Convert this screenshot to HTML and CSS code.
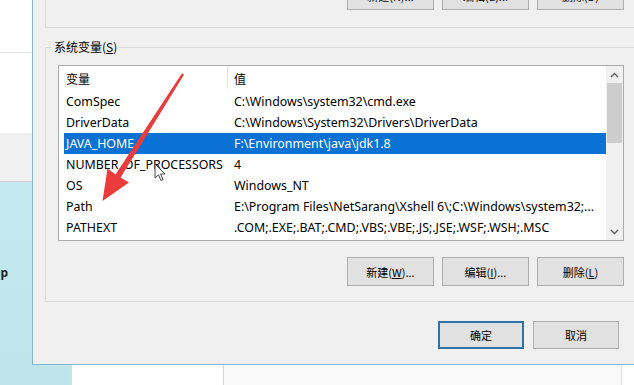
FILE: index.html
```html
<!DOCTYPE html>
<html lang="zh-CN">
<head>
<meta charset="utf-8">
<title>环境变量</title>
<link rel="stylesheet" href="styles.css">
</head>
<body>
<div class="screen">
  <div class="main">
    <div class="side">
      <div class="side-top"></div>
      <div class="side-mid"></div>
      <div class="side-gray"></div>
      <div class="side-cyan"><span class="frag">ıp</span></div>
    </div>
    <div class="dialog">
      <div class="user-group">
        <button class="btn">新建(N)...</button>
        <button class="btn">编辑(E)...</button>
        <button class="btn">删除(D)</button>
      </div>
      <fieldset class="sys-group">
        <legend>系统变量(<u>S</u>)</legend>
        <div class="list">
          <div class="list-body">
            <div class="list-head">
              <span class="head-name">变量</span>
              <span class="head-val">值</span>
            </div>
            <div class="row"><span class="c-name">ComSpec</span><span class="c-val">C:\Windows\system32\cmd.exe</span></div>
            <div class="row"><span class="c-name">DriverData</span><span class="c-val">C:\Windows\System32\Drivers\DriverData</span></div>
            <div class="row selected"><span class="c-name">JAVA_HOME</span><span class="c-val">F:\Environment\java\jdk1.8</span></div>
            <div class="row"><span class="c-name">NUMBER_OF_PROCESSORS</span><span class="c-val">4</span></div>
            <div class="row"><span class="c-name">OS</span><span class="c-val">Windows_NT</span></div>
            <div class="row"><span class="c-name">Path</span><span class="c-val">E:\Program Files\NetSarang\Xshell 6\;C:\Windows\system32;...</span></div>
            <div class="row"><span class="c-name">PATHEXT</span><span class="c-val">.COM;.EXE;.BAT;.CMD;.VBS;.VBE;.JS;.JSE;.WSF;.WSH;.MSC</span></div>
          </div>
          <div class="scrollbar">
            <div class="sb-btn"><svg width="9" height="6" viewBox="0 0 9 6"><polyline points="1,5 4.5,1.5 8,5" fill="none" stroke="#606060" stroke-width="1.4"/></svg></div>
            <div class="sb-thumb"></div>
            <div class="sb-track"></div>
            <div class="sb-btn"><svg width="9" height="6" viewBox="0 0 9 6"><polyline points="1,1 4.5,4.5 8,1" fill="none" stroke="#606060" stroke-width="1.4"/></svg></div>
          </div>
        </div>
        <div class="btn-row">
          <button class="btn">新建(<u>W</u>)...</button>
          <button class="btn">编辑(<u>I</u>)...</button>
          <button class="btn">删除(<u>L</u>)</button>
        </div>
      </fieldset>
      <div class="footer">
        <button class="btn btn-default">确定</button>
        <button class="btn">取消</button>
      </div>
    </div>
  </div>
  <div class="bottom">
    <div class="b-cyan"></div>
    <div class="b-white"></div>
    <div class="b-panel"></div>
    <div class="b-rest"></div>
  </div>
</div>
<svg class="arrow" width="634" height="385" viewBox="0 0 634 385">
  <polygon points="102.5,201 129,182.5 120.6,177.6 184,74.8 182,73.2 115.5,174.6 107.5,168.5" fill="#ec3b3b"/>
</svg>
<svg class="cursor" width="13" height="19" viewBox="0 0 13 19">
  <path d="M1,1 L1,15 L4.5,11.8 L7,17.5 L9,16.6 L6.6,11 L11,11 Z" fill="#fff" stroke="#444" stroke-width="1" stroke-linejoin="round"/>
</svg>
</body>
</html>
```
FILE: styles.css
```css
* { box-sizing: border-box; }
html, body { margin: 0; padding: 0; }
body {
  width: 634px;
  height: 385px;
  overflow: hidden;
  position: relative;
  background: #fff;
  font-family: "Noto Sans", "Noto Sans CJK SC", sans-serif;
  font-size: 12px;
  color: #000;
}
.screen { display: flex; flex-direction: column; width: 634px; height: 385px; }
.main { display: flex; height: 365px; flex: none; }

.side { width: 32px; flex: none; display: flex; flex-direction: column; }
.side-top { height: 53px; background: #fff; border-bottom: 1px solid #e4e4e4; }
.side-mid { height: 80px; background: #fff; }
.side-gray { height: 49px; background: #f0f0f0; border-bottom: 1px solid #c9cfd0; }
.side-cyan {
  flex: 1;
  background: linear-gradient(#c4eaef, #bde5ea);
  overflow: hidden;
  padding-top: 83px;
}
.frag { display: block; margin-left: -3px; font-weight: 700; font-size: 12px; line-height: 16px; color: #222; }

.dialog {
  flex: none;
  width: 622px;
  height: 365px;
  background: #f0f0f0;
  border-left: 1px solid #88b6cc;
  border-bottom: 1px solid #88b6cc;
  padding-left: 12px;
  display: flex;
  flex-direction: column;
}

.btn {
  font-family: "Noto Sans CJK SC", "Noto Sans", sans-serif;
  font-size: 11px;
  color: #000;
  background: #e1e1e1;
  border: 1px solid #adadad;
  width: 87px;
  height: 29px;
  padding: 0;
  margin: 0;
  flex: none;
}

.user-group {
  width: 592px;
  height: 28px;
  flex: none;
  border-left: 1px solid #dcdcdc;
  border-bottom: 1px solid #dcdcdc;
  display: flex;
  justify-content: flex-end;
  align-items: flex-end;
  gap: 8px;
  padding: 0 13px 17px 0;
  overflow: hidden;
}

.sys-group {
  width: 592px;
  flex: none;
  margin: 12px 0 0 0;
  border: 1px solid #dcdcdc;
  padding: 11px 12px 15px 12px;
  min-inline-size: 0;
}
.sys-group legend {
  font-family: "Noto Sans CJK SC", sans-serif;
  font-size: 12px;
  line-height: 14px;
  padding: 0 2px;
  margin-left: -6px;
  color: #000;
}

.list {
  height: 176px;
  border: 1px solid #ababab;
  background: #fff;
  display: flex;
}
.list-body { flex: 1; padding-left: 5px; overflow: hidden; }
.list-head { display: flex; height: 25px; }
.head-name {
  width: 164px;
  flex: none;
  padding: 5px 0 0 2px;
  line-height: 16px;
  border-right: 1px solid #e5e5e5;
  font-family: "Noto Sans CJK SC", sans-serif;
  margin-bottom: 2px;
}
.head-val {
  padding: 5px 0 0 6px;
  line-height: 16px;
  font-family: "Noto Sans CJK SC", sans-serif;
}
.row { display: flex; height: 21px; line-height: 21px; white-space: nowrap; font-size: 12.4px; }
.c-name { width: 164px; flex: none; padding-left: 2px; }
.c-val { padding-left: 6px; }
.row.selected { background: #0a72d4; color: #fff; }

.scrollbar { width: 17px; flex: none; background: #f0f0f0; display: flex; flex-direction: column; }
.sb-btn { height: 17px; flex: none; display: flex; align-items: center; justify-content: center; }
.sb-thumb { height: 60px; flex: none; margin: 0 1px; background: #cdcdcd; }
.sb-track { flex: 1; }

.btn-row { display: flex; justify-content: flex-end; gap: 8px; margin-top: 16px; }

.footer {
  width: 592px;
  display: flex;
  justify-content: flex-end;
  gap: 9px;
  margin-top: 19px;
  padding-right: 18px;
}
.footer .btn { height: 28px; width: 86px; }
.btn-default { border: 2px solid #2f73a6; }

.bottom { display: flex; height: 20px; flex: none; }
.b-cyan { width: 72px; background: #bde5ea; border-right: 1px solid #d0dfe2; }
.b-white { width: 152px; background: #fff; border-right: 1px solid #d6d6d6; }
.b-panel { width: 398px; background: #f9f9f9; border-right: 1px solid #e2e2e2; }
.b-rest { flex: 1; background: #fff; }

.arrow { position: absolute; left: 0; top: 0; pointer-events: none; }
.cursor { position: absolute; left: 154px; top: 163px; pointer-events: none; }
```
